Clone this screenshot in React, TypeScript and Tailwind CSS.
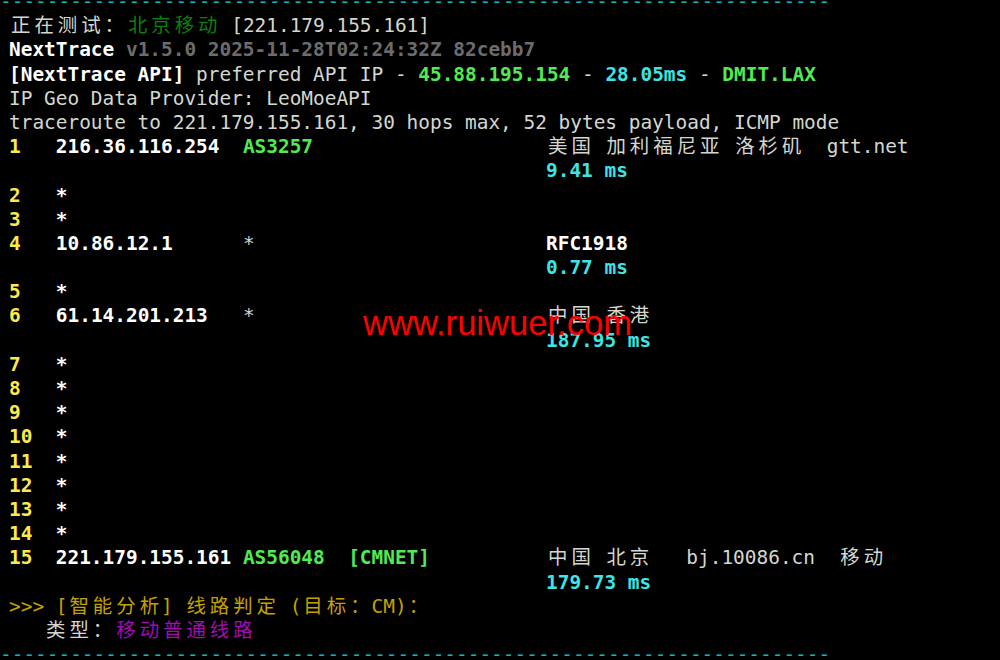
import React from "react";

type Seg = [string, string?];

const K: Record<string, string> = {
  D: "text-[#d3d7cf]",
  W: "font-bold text-[#ffffff]",
  Y: "font-bold text-[#fce94f]",
  G: "font-bold text-[#52ea52]",
  C: "font-bold text-[#3ee4e4]",
  V: "font-bold text-[#6c6c6c]",
  N: "text-[#0b7f0b]",
  O: "text-[#c4a000]",
  M: "text-[#a20cb2]",
  S: "text-[#10b4ba]",
};

const isWide = (ch: string) => /[\u3000-\u9fff\uff00-\uffef]/.test(ch);

function Run({ t, k }: { t: string; k?: string }) {
  const out: React.ReactNode[] = [];
  let buf = "";
  let i = 0;
  for (const ch of Array.from(t)) {
    if (isWide(ch)) {
      if (buf) out.push(<span key={i++}>{buf}</span>);
      buf = "";
      out.push(
        <span key={i++} className="inline-block w-[23.4px] text-center">
          {ch}
        </span>
      );
    } else buf += ch;
  }
  if (buf) out.push(<span key={i++}>{buf}</span>);
  return <span className={K[k || "D"]}>{out}</span>;
}

function Segs({ segs }: { segs: Seg[] }) {
  return (
    <>
      {segs.map((s, i) => (
        <Run key={i} t={s[0]} k={s[1]} />
      ))}
    </>
  );
}

type RowDef = { l: Seg[]; r?: Seg[] };

function Row({ row, cls = "" }: { row: RowDef; cls?: string }) {
  if (row.r) {
    return (
      <div className={"flex h-[24.2px] whitespace-pre " + cls}>
        <div className="w-[537px] shrink-0">
          <Segs segs={row.l} />
        </div>
        <div>
          <Segs segs={row.r} />
        </div>
      </div>
    );
  }
  return (
    <div className={"h-[24.2px] whitespace-pre " + cls}>
      <Segs segs={row.l} />
    </div>
  );
}

const dashes = "-".repeat(71);

const star = (n: string): RowDef => ({
  l: [[n, "Y"], [n.length === 1 ? "   " : "  ", "D"], ["*", "W"]],
});

const rows: RowDef[] = [
  { l: [["正在测试：", "D"], ["北京移动", "N"], [" [221.179.155.161]", "D"]] },
  { l: [["NextTrace", "W"], [" v1.5.0 2025-11-28T02:24:32Z 82cebb7", "V"]] },
  {
    l: [
      ["[NextTrace API]", "W"],
      [" preferred API IP - ", "D"],
      ["45.88.195.154", "G"],
      [" - ", "D"],
      ["28.05ms", "C"],
      [" - ", "D"],
      ["DMIT.LAX", "G"],
    ],
  },
  { l: [["IP Geo Data Provider: LeoMoeAPI", "D"]] },
  {
    l: [
      ["traceroute to 221.179.155.161, 30 hops max, 52 bytes payload, ICMP mode", "D"],
    ],
  },
  {
    l: [
      ["1", "Y"],
      ["   ", "D"],
      ["216.36.116.254", "W"],
      ["  ", "D"],
      ["AS3257", "G"],
    ],
    r: [["美国 加利福尼亚 洛杉矶  gtt.net", "D"]],
  },
  { l: [], r: [["9.41 ms", "C"]] },
  star("2"),
  star("3"),
  {
    l: [
      ["4", "Y"],
      ["   ", "D"],
      ["10.86.12.1", "W"],
      ["      ", "D"],
      ["*", "D"],
    ],
    r: [["RFC1918", "W"]],
  },
  { l: [], r: [["0.77 ms", "C"]] },
  star("5"),
  {
    l: [
      ["6", "Y"],
      ["   ", "D"],
      ["61.14.201.213", "W"],
      ["   ", "D"],
      ["*", "D"],
    ],
    r: [["中国 香港", "D"]],
  },
  { l: [], r: [["187.95 ms", "C"]] },
  star("7"),
  star("8"),
  star("9"),
  star("10"),
  star("11"),
  star("12"),
  star("13"),
  star("14"),
  {
    l: [
      ["15", "Y"],
      ["  ", "D"],
      ["221.179.155.161", "W"],
      [" ", "D"],
      ["AS56048", "G"],
      ["  ", "D"],
      ["[CMNET]", "G"],
    ],
    r: [["中国 北京   bj.10086.cn  ", "D"], ["移动", "D"]],
  },
  { l: [], r: [["179.73 ms", "C"]] },
  { l: [[">>> [智能分析] 线路判定 (目标：CM)：", "O"]] },
  { l: [["   类型：", "D"], ["移动普通线路", "M"]] },
];

export default function App() {
  return (
    <div className="relative w-[1000px] h-[660px] overflow-hidden bg-black">
      <div
        className="-mt-[10px] pl-[9px] text-[19.43px] leading-[24.2px]"
        style={{ fontFamily: '"DejaVu Sans Mono", "Noto Sans CJK SC", monospace' }}
      >
        <Row row={{ l: [[dashes, "S"]] }} cls="-ml-[9px]" />
        {rows.map((r, i) => (
          <Row key={i} row={r} />
        ))}
        <Row row={{ l: [[dashes, "S"]] }} cls="-ml-[9px]" />
      </div>
      <div
        className="absolute left-[363px] top-[306px] text-[34.6px] leading-none text-[#ff0000]"
        style={{ fontFamily: '"Liberation Sans", Arial, sans-serif' }}
      >
        www.ruiwuer.com
      </div>
    </div>
  );
}
